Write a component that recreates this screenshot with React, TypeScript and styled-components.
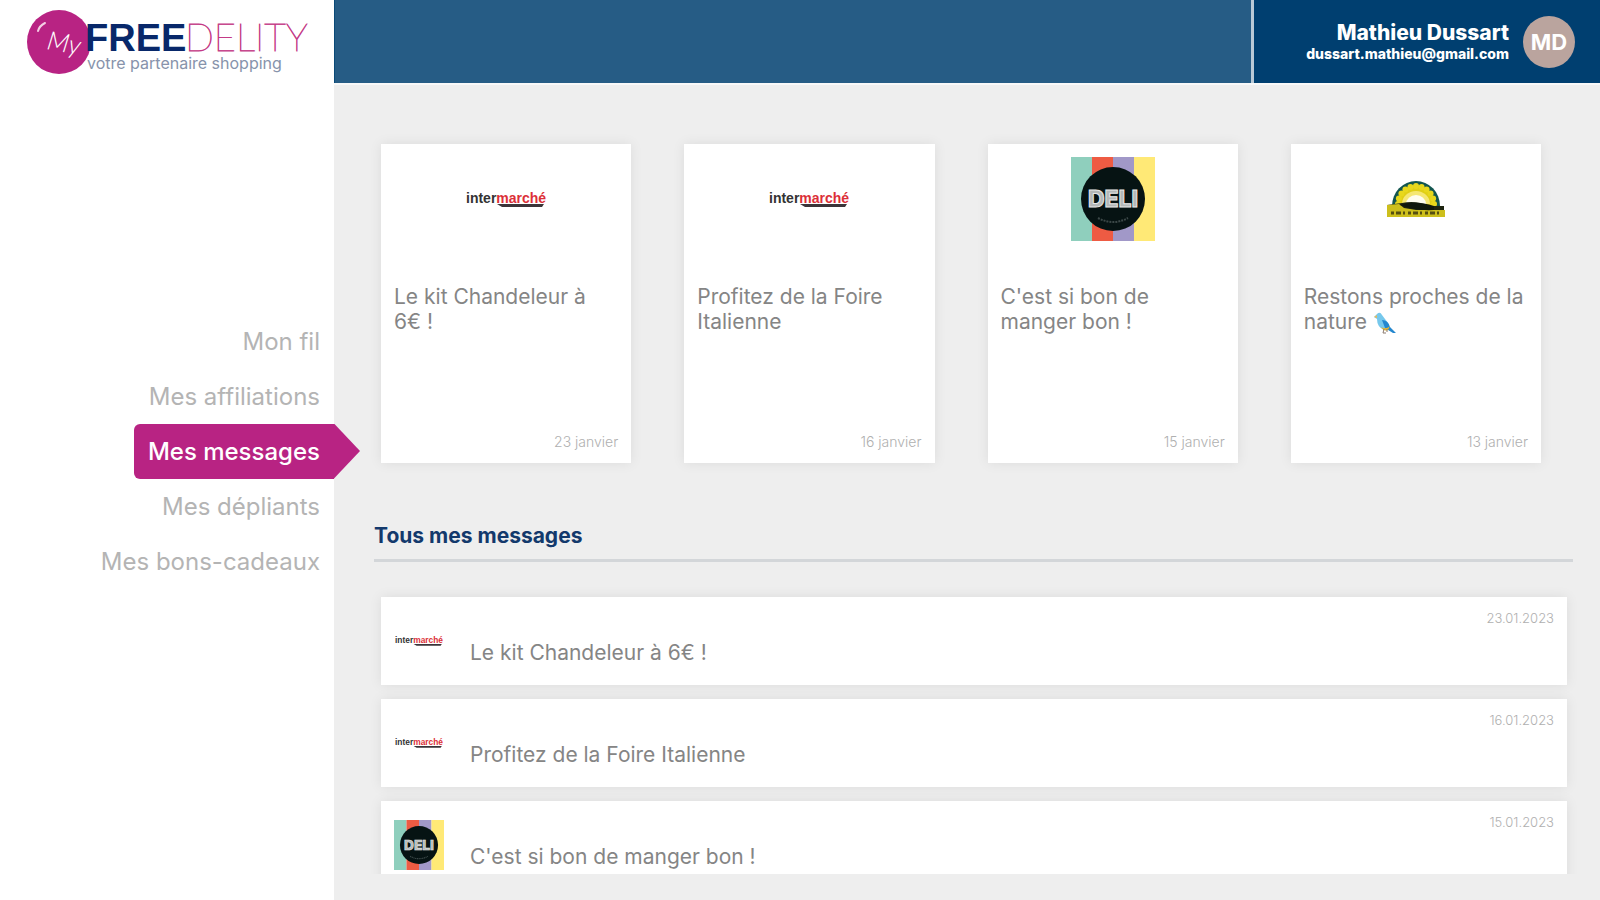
import React from "react";
import styled, { createGlobalStyle, css } from "styled-components";

const GlobalStyle = createGlobalStyle`
  *, *::before, *::after { box-sizing: border-box; }
  body {
    margin: 0;
    background: #eeeeee;
    font-family: Inter, "Liberation Sans", sans-serif;
    color: #858585;
  }
  h1, h2, h3, p, ul { margin: 0; padding: 0; font-weight: inherit; font-size: inherit; }
  ul { list-style: none; }
  a { color: inherit; text-decoration: none; }
  svg { display: block; }
`;

const Page = styled.div`
  display: grid;
  grid-template-columns: 334px minmax(0, 1fr);
  height: 100vh;
`;

const Sidebar = styled.aside`
  display: flex;
  flex-direction: column;
  background: #fff;
  padding-bottom: 84px;
`;

const Brand = styled.a`
  display: block;
  height: 86px;
`;

const Nav = styled.nav`
  flex: 1;
  display: flex;
  flex-direction: column;
  justify-content: center;
  align-items: flex-end;
`;

const NavLink = styled.a<{ $active?: boolean }>`
  position: relative;
  height: 55px;
  padding: 0 14px;
  border-radius: 6px 0 0 6px;
  font-size: 24px;
  line-height: 55px;
  font-weight: 400;
  color: #b4b4b4;

  ${(p) =>
    p.$active &&
    css`
      background: #b82383;
      color: #fff;
      font-weight: 500;

      &::after {
        content: "";
        position: absolute;
        top: 0;
        left: 100%;
        width: 26px;
        height: 100%;
        background: #b82383;
        clip-path: polygon(0 0, 100% 50%, 0 100%);
      }
    `}
`;

const Content = styled.div`
  display: flex;
  flex-direction: column;
  min-width: 0;
  min-height: 0;
`;

const Header = styled.header`
  display: flex;
  flex: none;
  height: 85px;
  border-bottom: 2px solid #f8f8f8;
`;

const HeaderBar = styled.div`
  flex: 1;
  background: #265c85;
  border-left: 1px solid #0a4a78;
`;

const UserPanel = styled.div`
  display: flex;
  align-items: center;
  justify-content: flex-end;
  gap: 14px;
  width: 349px;
  padding-right: 25px;
  border-left: 3px solid #b9c9d6;
  background: #003f70;
  color: #fff;
  text-align: right;
`;

const UserName = styled.p`
  font-size: 21px;
  line-height: 24px;
  font-weight: 800;
`;

const UserEmail = styled.p`
  font-size: 14px;
  line-height: 18px;
  font-weight: 800;
`;

const Avatar = styled.div`
  width: 52px;
  height: 52px;
  border-radius: 50%;
  background: #baa49e;
  font-size: 22px;
  line-height: 52px;
  font-weight: 700;
  text-align: center;
`;

const Main = styled.main`
  flex: 1;
  display: flex;
  flex-direction: column;
  min-height: 0;
  padding: 59px 27px 26px 40px;
`;

const CardGrid = styled.div`
  display: grid;
  grid-template-columns: repeat(4, minmax(0, 1fr));
  gap: 53px;
  padding: 0 32px 0 7px;
`;

const panel = css`
  background: #fff;
  box-shadow: 0 0 12px rgba(0, 0, 0, 0.08);
`;

const Card = styled.a`
  ${panel}
  display: flex;
  flex-direction: column;
  height: 319px;
  padding: 13px;
`;

const CardLogo = styled.div`
  display: flex;
  justify-content: center;
  align-items: center;
  height: 84px;
`;

const CardTitle = styled.h3`
  flex: 1;
  margin-top: 43px;
  font-size: 21px;
  line-height: 25px;
  font-weight: 400;
`;

const DateLabel = styled.time`
  align-self: flex-end;
  font-size: 14px;
  line-height: 16px;
  font-weight: 300;
  color: #b0b0b0;
`;

const SectionTitle = styled.h2`
  margin-top: 59px;
  padding-bottom: 9px;
  border-bottom: 3px solid #d3d6d9;
  font-size: 21px;
  line-height: 28px;
  font-weight: 700;
  color: #13396c;
`;

const MessageList = styled.ul`
  flex: 1;
  display: flex;
  flex-direction: column;
  gap: 14px;
  min-height: 0;
  margin: 20px -6px 0 -6px;
  padding: 15px 12px 0 13px;
  overflow: hidden;
`;

const MessageRow = styled.a`
  ${panel}
  display: grid;
  grid-template-columns: 50px minmax(0, 1fr) auto;
  column-gap: 26px;
  height: 88px;
  padding: 0 13px;
`;

const RowLogo = styled.div`
  display: flex;
  align-items: center;
  justify-content: center;
`;

const RowTitle = styled.h3`
  padding-top: 43px;
  font-size: 21px;
  line-height: 25px;
  font-weight: 400;
`;

const RowDate = styled(DateLabel)`
  align-self: start;
  padding-top: 13px;
  font-size: 13px;
`;

const BirdIcon = styled.svg`
  display: inline-block;
  vertical-align: -6px;
`;

function BrandLogo() {
  return (
    <svg width="334" height="85" viewBox="0 0 334 85" role="img" aria-label="My Freedelity">
      <circle cx="59" cy="42" r="32" fill="#b82383" />
      <path d="M38 31c1-4 3-6 7-8" fill="none" stroke="#f3cfe4" strokeWidth="2" strokeLinecap="round" />
      <text x="46" y="49" fontFamily="Lato, sans-serif" fontSize="26" fontStyle="italic" fontWeight="300" fill="#fff" transform="rotate(10 46 49)">
        My
      </text>
      <text x="85" y="51" fontFamily="Liberation Sans, sans-serif" fontSize="38" fontWeight="700" fill="#08286a">
        FREE
      </text>
      <text x="185" y="51" fontFamily="Lato, sans-serif" fontSize="38" fontWeight="100" fill="#c43a86" stroke="#c43a86" strokeWidth="0.8">
        DELITY
      </text>
      <text x="87" y="69" fontFamily="Inter, sans-serif" fontSize="16" fontWeight="400" fill="#8793ab">
        votre partenaire shopping
      </text>
    </svg>
  );
}

function IntermarcheLogo({ width }: { width: number }) {
  return (
    <svg width={width} height={(width * 20) / 80} viewBox="0 0 80 20" role="img" aria-label="Intermarché">
      <text x="0" y="14" fontFamily="Liberation Sans, sans-serif" fontSize="14" fontWeight="700" fill="#333">
        inter
        <tspan fill="#dc2f38">marché</tspan>
      </text>
      <path d="M31 15H78L76 18H36z" fill="#3b3439" />
    </svg>
  );
}

function DeliLogo({ size }: { size: number }) {
  return (
    <svg width={size} height={size} viewBox="0 0 84 84" role="img" aria-label="Deli">
      <rect width="21" height="84" fill="#8fcfbd" />
      <rect x="21" width="21" height="84" fill="#ee5b43" />
      <rect x="42" width="21" height="84" fill="#a198c8" />
      <rect x="63" width="21" height="84" fill="#ffe976" />
      <circle cx="42" cy="42" r="32" fill="#061313" />
      <text x="42" y="50" textAnchor="middle" fontFamily="Inter, sans-serif" fontSize="23" fontWeight="800" fill="#b4b8b8" stroke="#e8e8e8" strokeWidth="1">
        DELI
      </text>
      <path d="M27 61q15 8 30 0" fill="none" stroke="#3c4848" strokeWidth="2" strokeDasharray="2 1" />
    </svg>
  );
}

function SunLogo() {
  const rays = Array.from({ length: 11 }, (_, i) => {
    const a = Math.PI * (i / 10);
    return { x: 30 - Math.cos(a) * 18, y: 25 - Math.sin(a) * 18 };
  });
  return (
    <svg width="60" height="40" viewBox="0 0 60 40" role="img" aria-label="Soleil">
      <path d="M6 27a24 25 0 0 1 48 0z" fill="#13564f" />
      <path d="M11 27a19 20 0 0 1 38 0z" fill="#e0cf16" />
      {rays.map((r, i) => (
        <circle key={i} cx={r.x} cy={r.y} r="3" fill="#e8d81c" />
      ))}
      <path d="M16 25a14 13 0 0 1 28 0z" fill="#f5e773" />
      <path d="M20 25a10 9 0 0 1 20 0z" fill="#fffdf0" />
      <path d="M1 26L16 24q14-3 28 3l14 0v5H1z" fill="#1d2410" />
      <path d="M1 26l12-1 5 4 12 2h29v7H1z" fill="#cdbf1c" />
      <path d="M14 26q15-5 34 1v4q-20 1-34-5z" fill="#11180c" />
      <path d="M5 34h50" stroke="#554f10" strokeWidth="3" strokeDasharray="3 2 5 2 2 3" />
    </svg>
  );
}

function Bird() {
  return (
    <BirdIcon width="24" height="24" viewBox="0 0 24 24" role="img" aria-label="oiseau">
      <path d="M1 6L4 3Q7 0 9 4L15 12 17 17 11 19Q4 16 4 8z" fill="#76c8ec" />
      <path d="M9 9Q15 9 17 16L23 22 20 22 12 17z" fill="#2487ce" />
      <path d="M8 16q5 3 9-1l-2 4q-4 2-7-3z" fill="#e6b52d" />
      <path d="M1 6l3-2v3z" fill="#e9ba59" />
      <path d="M11 18l-1 4 3 0M14 18l0 3" fill="none" stroke="#8b7b70" strokeWidth="1" />
    </BirdIcon>
  );
}

const navItems = ["Mon fil", "Mes affiliations", "Mes messages", "Mes dépliants", "Mes bons-cadeaux"];

const cards = [
  { title: "Le kit Chandeleur à 6€ !", date: "23 janvier", iso: "2023-01-23", logo: <IntermarcheLogo width={80} /> },
  { title: "Profitez de la Foire Italienne", date: "16 janvier", iso: "2023-01-16", logo: <IntermarcheLogo width={80} /> },
  { title: "C'est si bon de manger bon !", date: "15 janvier", iso: "2023-01-15", logo: <DeliLogo size={84} /> },
  { title: "Restons proches de la nature ", date: "13 janvier", iso: "2023-01-13", logo: <SunLogo />, bird: true },
];

const messages = [
  { title: "Le kit Chandeleur à 6€ !", date: "23.01.2023", iso: "2023-01-23", logo: <IntermarcheLogo width={48} /> },
  { title: "Profitez de la Foire Italienne", date: "16.01.2023", iso: "2023-01-16", logo: <IntermarcheLogo width={48} /> },
  { title: "C'est si bon de manger bon !", date: "15.01.2023", iso: "2023-01-15", logo: <DeliLogo size={50} /> },
];

export default function App() {
  return (
    <>
      <GlobalStyle />
      <Page>
        <Sidebar>
          <Brand href="#">
            <BrandLogo />
          </Brand>
          <Nav>
            {navItems.map((item) => (
              <NavLink key={item} href="#" $active={item === "Mes messages"}>
                {item}
              </NavLink>
            ))}
          </Nav>
        </Sidebar>
        <Content>
          <Header>
            <HeaderBar />
            <UserPanel>
              <div>
                <UserName>Mathieu Dussart</UserName>
                <UserEmail>dussart.mathieu@gmail.com</UserEmail>
              </div>
              <Avatar>MD</Avatar>
            </UserPanel>
          </Header>
          <Main>
            <CardGrid>
              {cards.map((c) => (
                <Card key={c.iso} href="#">
                  <CardLogo>{c.logo}</CardLogo>
                  <CardTitle>
                    {c.title}
                    {c.bird && <Bird />}
                  </CardTitle>
                  <DateLabel dateTime={c.iso}>{c.date}</DateLabel>
                </Card>
              ))}
            </CardGrid>
            <SectionTitle>Tous mes messages</SectionTitle>
            <MessageList>
              {messages.map((m) => (
                <li key={m.iso}>
                  <MessageRow href="#">
                    <RowLogo>{m.logo}</RowLogo>
                    <RowTitle>{m.title}</RowTitle>
                    <RowDate dateTime={m.iso}>{m.date}</RowDate>
                  </MessageRow>
                </li>
              ))}
            </MessageList>
          </Main>
        </Content>
      </Page>
    </>
  );
}
